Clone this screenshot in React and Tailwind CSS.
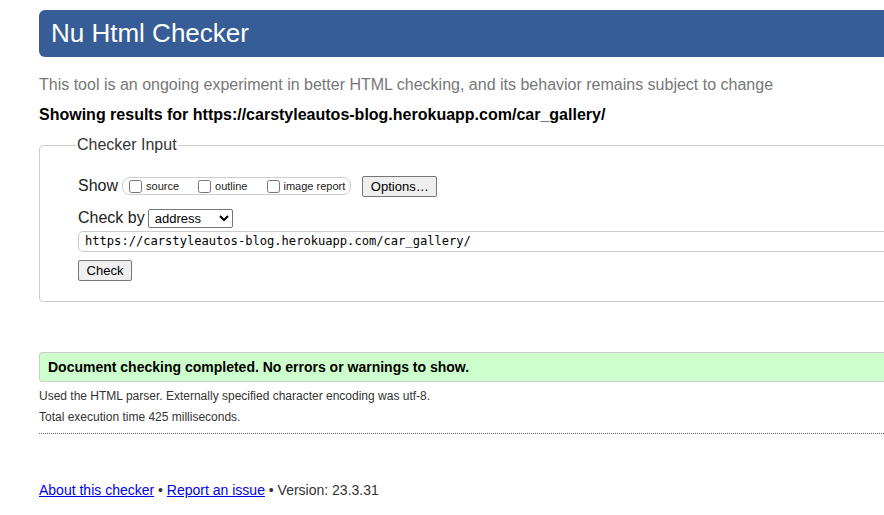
import React from 'react';

function App() {
  return (
    <div className="w-[884px] h-[515px] overflow-hidden bg-white font-['Liberation_Sans',Arial,sans-serif] text-[#222]">
      <div className="w-[1000px] pl-[39px] pt-[10px]">
        <div className="h-[47px] bg-[#365d95] rounded-[6px] flex items-center pl-[12px]">
          <h1 className="text-white text-[26px] leading-none mt-[-1px]">Nu Html Checker</h1>
        </div>

        <p className="mt-[19px] text-[16px] leading-[18px] text-[#777]">
          This tool is an ongoing experiment in better HTML checking, and its behavior remains subject to change
        </p>
        <p className="mt-[12px] text-[16px] leading-[18px] font-bold text-black">
          Showing results for https://carstyleautos-blog.herokuapp.com/car_gallery/
        </p>

        <fieldset className="mt-[12px] h-[166px] border border-[#ccc] rounded-[4px] pl-[38px] pr-0">
          <legend className="ml-[-2px] px-[1px] text-[16px] leading-[18px] text-[#333]">Checker Input</legend>

          <div className="mt-[21px] flex items-center h-[22px]">
            <span className="text-[16px] mr-[4px]">Show</span>
            <div className="flex items-center h-[18px] border border-[#ccc] rounded-[8px] pl-[6px] pr-[5px] text-[11px]">
              <label className="flex items-center mr-[19px]">
                <input type="checkbox" className="w-[13px] h-[13px] mr-[4px]" />
                <span>source</span>
              </label>
              <label className="flex items-center mr-[20px]">
                <input type="checkbox" className="w-[13px] h-[13px] mr-[4px]" />
                <span>outline</span>
              </label>
              <label className="flex items-center">
                <input type="checkbox" className="w-[13px] h-[13px] mr-[3px]" />
                <span>image report</span>
              </label>
            </div>
            <button className="ml-[11px] h-[21px] w-[75px] border border-[#767676] rounded-[2px] bg-[#efefef] text-[13px] text-black">
              Options…
            </button>
          </div>

          <div className="mt-[11px] flex items-center h-[20px]">
            <span className="text-[16px] mr-[3px]">Check by</span>
            <select className="h-[19px] w-[85px] border border-[#767676] rounded-[2px] text-[13px] text-black pl-[2px]" defaultValue="address">
              <option value="address">address</option>
            </select>
          </div>

          <div className="mt-[3px] h-[21px] border border-[#ccc] rounded-[5px] flex items-center pl-[6px] font-['DejaVu_Sans_Mono',monospace] text-[12.1px] text-black">
            https://carstyleautos-blog.herokuapp.com/car_gallery/
          </div>

          <button className="mt-[8px] h-[21px] w-[54px] border border-[#767676] rounded-[2px] bg-[#efefef] text-[13px] text-black">
            Check
          </button>
        </fieldset>

        <div className="mt-[50px] h-[30px] bg-[#ccffcc] border border-[#ccc] rounded-[3px] flex items-center pl-[8px] text-[14px] font-bold text-black">
          Document checking completed. No errors or warnings to show.
        </div>

        <p className="mt-[6px] text-[12px] leading-[16px] text-[#333]">
          Used the HTML parser. Externally specified character encoding was utf-8.
        </p>
        <p className="mt-[5px] text-[12px] leading-[16px] text-[#333]">
          Total execution time 425 milliseconds.
        </p>
        <div className="mt-[8px] border-t border-dotted border-[#666]" />

        <p className="mt-[47px] text-[14px] leading-[18px] text-[#333]">
          <a href="#" className="text-[#0000ee] underline">About this checker</a>
          {' • '}
          <a href="#" className="text-[#0000ee] underline">Report an issue</a>
          {' • Version: 23.3.31'}
        </p>
      </div>
    </div>
  );
}

export default App;
